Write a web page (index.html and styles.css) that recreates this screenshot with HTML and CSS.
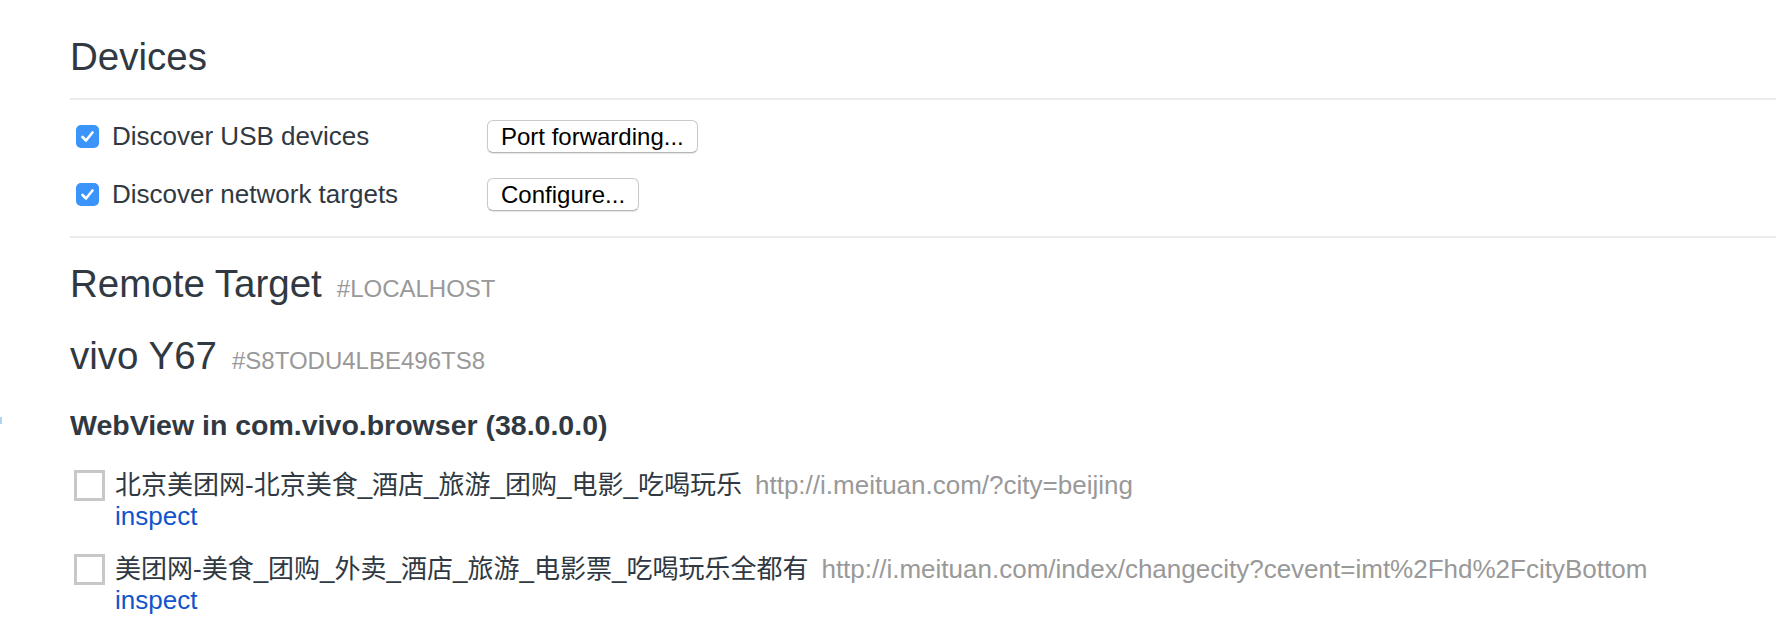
FILE: index.html
```html
<!DOCTYPE html>
<html lang="en">
<head>
<meta charset="utf-8">
<title>Inspect with Chrome Developer Tools</title>
<link rel="stylesheet" href="styles.css">
</head>
<body>
<div class="edge-mark"></div>
<main class="page">
  <div class="section-title">Devices</div>
  <div class="divider"></div>
  <div class="options">
    <div class="option-row">
      <label class="option-label">
        <span class="checkbox"><svg viewBox="0 0 23 23" width="23" height="23"><polyline points="6.5,12 10,15.5 16.5,7.5" fill="none" stroke="#fff" stroke-width="2.6" stroke-linecap="round" stroke-linejoin="round"/></svg></span>
        <span>Discover USB devices</span>
      </label>
      <button class="btn">Port forwarding...</button>
    </div>
    <div class="option-row">
      <label class="option-label">
        <span class="checkbox"><svg viewBox="0 0 23 23" width="23" height="23"><polyline points="6.5,12 10,15.5 16.5,7.5" fill="none" stroke="#fff" stroke-width="2.6" stroke-linecap="round" stroke-linejoin="round"/></svg></span>
        <span>Discover network targets</span>
      </label>
      <button class="btn">Configure...</button>
    </div>
  </div>
  <div class="divider divider-flush"></div>
  <div class="section-title remote-title">Remote Target<span class="serial serial-host">#LOCALHOST</span></div>
  <div class="section-title device-name">vivo Y67<span class="serial serial-device">#S8TODU4LBE496TS8</span></div>
  <div class="browser-name">WebView in com.vivo.browser (38.0.0.0)</div>
  <div class="targets">
    <div class="target">
      <div class="thumb"></div>
      <div class="target-info">
        <div class="target-line"><span class="target-title">北京美团网-北京美食_酒店_旅游_团购_电影_吃喝玩乐</span><span class="target-url">http://i.meituan.com/?city=beijing</span></div>
        <a class="inspect" href="#">inspect</a>
      </div>
    </div>
    <div class="target">
      <div class="thumb"></div>
      <div class="target-info">
        <div class="target-line"><span class="target-title">美团网-美食_团购_外卖_酒店_旅游_电影票_吃喝玩乐全都有</span><span class="target-url">http://i.meituan.com/index/changecity?cevent=imt%2Fhd%2FcityBottom</span></div>
        <a class="inspect" href="#">inspect</a>
      </div>
    </div>
  </div>
</main>
</body>
</html>
```

FILE: styles.css
```css
html, body {
  margin: 0;
  background: #ffffff;
}

body {
  font-family: "Liberation Sans", Arial, "Noto Sans CJK SC", sans-serif;
  color: #303942;
  position: relative;
  overflow: hidden;
}

.edge-mark {
  position: absolute;
  left: 0;
  top: 417px;
  width: 2px;
  height: 7px;
  background: #a9d6f7;
}

.page {
  padding: 35px 0 0 70px;
}

.section-title {
  font-size: 38.5px;
  line-height: 44px;
  font-weight: normal;
  margin: 0;
}

.divider {
  height: 2px;
  background: #ebebeb;
  margin-top: 19px;
}

.divider-flush {
  margin-top: 0;
}

.options {
  display: flex;
  flex-direction: column;
  gap: 25px;
  padding: 20px 0 25px 6px;
}

.option-row {
  display: flex;
  align-items: center;
  height: 33px;
}

.option-label {
  width: 411px;
  display: flex;
  align-items: center;
  gap: 13px;
  font-size: 26px;
}

.checkbox {
  width: 23px;
  height: 23px;
  border-radius: 5px;
  background: #3b94f9;
  display: flex;
  align-items: center;
  justify-content: center;
  flex: none;
}

.checkbox svg {
  display: block;
}

.btn {
  font-family: "Liberation Sans", Arial, sans-serif;
  font-size: 24px;
  line-height: 27px;
  height: 33px;
  padding: 2px 13px;
  border: 1px solid #c9c9c9;
  border-bottom-color: #b5b5b5;
  border-radius: 6px;
  background: #ffffff;
  color: #000000;
  box-shadow: 0 1px 1px rgba(0, 0, 0, 0.1);
  box-sizing: border-box;
}

.serial {
  font-size: 24px;
  line-height: 1;
  color: #999999;
}

.serial-host {
  margin-left: 15px;
}

.serial-device {
  margin-left: 15px;
}

.remote-title {
  margin-top: 24px;
}

.device-name {
  margin-top: 28px;
}

.browser-name {
  font-size: 28.5px;
  line-height: 30px;
  font-weight: bold;
  margin-top: 32px;
}

.targets {
  margin-top: 30px;
  display: flex;
  flex-direction: column;
  gap: 22px;
}

.target {
  display: flex;
  align-items: flex-start;
  gap: 10px;
  padding-left: 4px;
}

.thumb {
  width: 31px;
  height: 31px;
  border: 3px solid #c8c8c8;
  box-sizing: border-box;
  flex: none;
}

.target-info {
  font-size: 26px;
  line-height: 31px;
}

.target-line {
  white-space: nowrap;
}

.target-url {
  color: #999999;
  margin-left: 13px;
}

.inspect {
  color: #1155cc;
  text-decoration: none;
}
```
